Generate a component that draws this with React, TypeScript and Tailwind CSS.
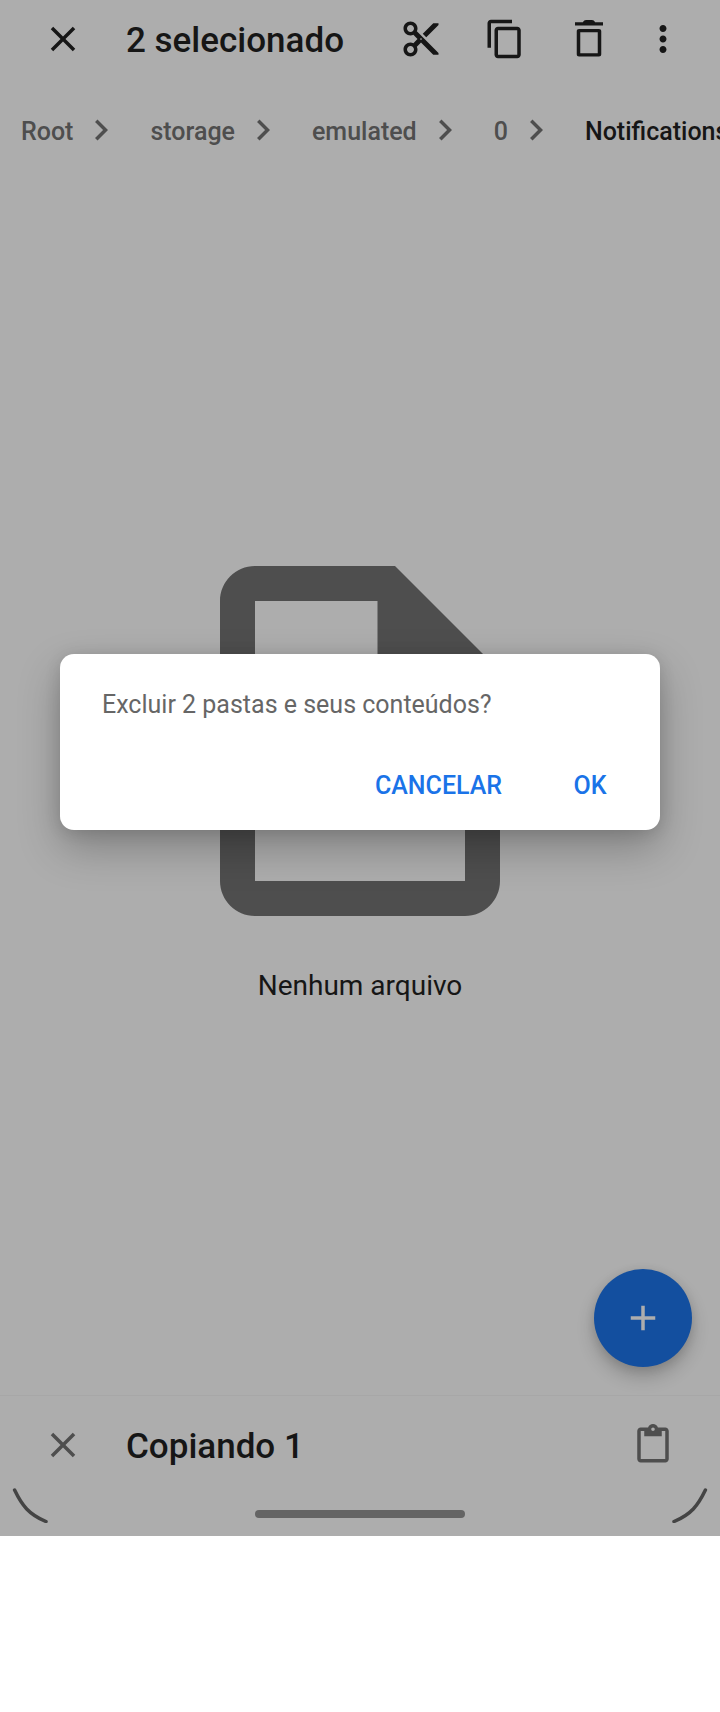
import type { ReactNode } from "react";

function Icon({ children, className = "size-[42px]" }: { children: ReactNode; className?: string }) {
  return (
    <svg viewBox="0 0 24 24" fill="currentColor" aria-hidden="true" className={`${className} shrink-0`}>
      {children}
    </svg>
  );
}

const closePath =
  "M19 6.41 17.59 5 12 10.59 6.41 5 5 6.41 10.59 12 5 17.59 6.41 19 12 13.41 17.59 19 19 17.59 13.41 12z";

const parents = ["Root", "storage", "emulated", "0"];

function TopBar() {
  return (
    <header className="flex h-[78px] items-center px-[36px]">
      <button type="button" aria-label="Fechar" className="ml-[6px]">
        <Icon><path d={closePath} /></Icon>
      </button>
      <h1 className="ml-[42px] flex-1 pt-1 text-[35px] leading-[42px] font-medium whitespace-nowrap">2 selecionado</h1>
      <div className="flex gap-[42px]">
        <button type="button" aria-label="Recortar">
          <Icon>
            <path d="M9.64 7.64c.23-.5.36-1.05.36-1.64 0-2.21-1.79-4-4-4S2 3.79 2 6s1.79 4 4 4c.59 0 1.14-.13 1.64-.36L10 12l-2.36 2.36C7.14 14.13 6.59 14 6 14c-2.21 0-4 1.79-4 4s1.79 4 4 4 4-1.79 4-4c0-.59-.13-1.14-.36-1.64L12 14l7 7h3v-1L9.64 7.64zM6 8c-1.1 0-2-.89-2-2s.9-2 2-2 2 .89 2 2-.9 2-2 2zm0 12c-1.1 0-2-.89-2-2s.9-2 2-2 2 .89 2 2-.9 2-2 2zm6-7.5c-.28 0-.5-.22-.5-.5s.22-.5.5-.5.5.22.5.5-.22.5-.5.5zM19 3l-6 6 2 2 7-7V3z" />
          </Icon>
        </button>
        <button type="button" aria-label="Copiar">
          <Icon>
            <path d="M16 1H4c-1.1 0-2 .9-2 2v14h2V3h12V1zm3 4H8c-1.1 0-2 .9-2 2v14c0 1.1.9 2 2 2h11c1.1 0 2-.9 2-2V7c0-1.1-.9-2-2-2zm0 16H8V7h11v14z" />
          </Icon>
        </button>
        <button type="button" aria-label="Excluir">
          <Icon>
            <path d="M4 2.4h4.5C9 1.5 9.5 1.1 10.3 1.1h3.4C14.5 1.1 15 1.5 15.5 2.4H20v1.900H4zM6.300 6.300h11.400c.8 0 1.300.5 1.300 1.300v13.100c0 .8-.5 1.300-1.300 1.300H6.300C5.500 22 5 21.500 5 20.700V7.600c0-.8.5-1.300 1.300-1.300zM7 8.200v11.900h10V8.200z" fillRule="evenodd" />
          </Icon>
        </button>
        <button type="button" aria-label="Mais opções" className="-ml-[10px]">
          <Icon>
            <path d="M12 8c1.100 0 2-.9 2-2s-.9-2-2-2-2 .9-2 2 .9 2 2 2zm0 2c-1.100 0-2 .9-2 2s.9 2 2 2 2-.9 2-2-.9-2-2-2zm0 6c-1.100 0-2 .9-2 2s.9 2 2 2 2-.9 2-2-.9-2-2-2z" />
          </Icon>
        </button>
      </div>
    </header>
  );
}

function Breadcrumbs() {
  return (
    <nav aria-label="Caminho" className="flex h-[104px] items-center overflow-hidden px-[21px] text-[25px] leading-[30px] font-medium whitespace-nowrap">
      {parents.map((name) => (
        <div key={name} className="mr-[28px] flex shrink-0 items-center gap-[7px] text-[#4e4e4e]">
          <a href="#" className="pt-1">{name}</a>
          <Icon><path d="M10 6 8.590 7.410 13.170 12l-4.580 4.590L10 18l6-6z" /></Icon>
        </div>
      ))}
      <a href="#" aria-current="page" className="shrink-0 pt-1">Notifications</a>
    </nav>
  );
}

function BottomBar() {
  return (
    <footer className="border-t border-[#a7a7a7]">
      <div className="flex h-[98px] items-center pr-[46px] pl-[42px]">
        <button type="button" aria-label="Cancelar cópia" className="text-[#4e4e4e]">
          <Icon><path d={closePath} /></Icon>
        </button>
        <h2 className="ml-[42px] flex-1 pt-1 text-[35px] leading-[42px] font-medium">Copiando 1</h2>
        <button type="button" aria-label="Colar" className="text-[#4e4e4e]">
          <Icon>
            <path d="M19 2h-4.180C14.400.84 13.300 0 12 0S9.600.84 9.180 2H5c-1.100 0-2 .9-2 2v16c0 1.100.9 2 2 2h14c1.100 0 2-.9 2-2V4c0-1.100-.9-2-2-2zm-7 0c.55 0 1 .45 1 1s-.45 1-1 1-1-.45-1-1 .45-1 1-1zm7 18H5V4h2v3h10V4h2v16z" />
          </Icon>
        </button>
      </div>
      <div className="flex h-[42px] items-start justify-between px-[12px] text-[#444444]">
        <svg viewBox="0 0 36 36" className="-mt-[7px] size-[36px]" fill="none" stroke="currentColor" strokeWidth="3.5" strokeLinecap="round" aria-hidden="true">
          <path d="M2.600 3C10 18.500 17 27.500 34 34.500" />
        </svg>
        <div className="mt-[16px] h-[8px] w-[210px] rounded-full bg-[#646464]" />
        <svg viewBox="0 0 36 36" className="-mt-[7px] size-[36px]" fill="none" stroke="currentColor" strokeWidth="3.5" strokeLinecap="round" aria-hidden="true">
          <path d="M33.400 3C26 18.500 19 27.500 2 34.500" />
        </svg>
      </div>
    </footer>
  );
}

function ConfirmDialog() {
  return (
    <div className="absolute inset-0 flex items-center px-[60px] pb-[52px]">
      <div
        role="dialog"
        aria-modal="true"
        aria-labelledby="confirm-message"
        className="w-full rounded-[14px] bg-white pt-[35px] pb-[13px] shadow-[0_18px_42px_rgba(0,0,0,0.26),0_2px_16px_rgba(0,0,0,0.12)]"
      >
        <p id="confirm-message" className="px-[42px] text-[25px] leading-[32px] text-[#666666]">
          Excluir 2 pastas e seus conteúdos?
        </p>
        <div className="mt-[33px] flex justify-end gap-[35px] px-[39px] text-[25px] leading-[30px] font-medium text-[#1a73e8]">
          <button type="button" className="h-[63px] w-[171px]">CANCELAR</button>
          <button type="button" className="h-[63px] w-[62px]">OK</button>
        </div>
      </div>
    </div>
  );
}

export default function App() {
  return (
    <div className="min-h-screen bg-white font-['Roboto',sans-serif] text-[#161616]">
      <div className="relative flex min-h-[1536px] flex-col overflow-hidden bg-[#adadad]">
        <TopBar />
        <Breadcrumbs />
        <main className="relative flex flex-1 flex-col items-center justify-center pb-[43px]">
          <Icon className="size-[420px] text-[#4e4e4e]">
            <path d="M14 2H6c-1.100 0-2 .9-2 2v16c0 1.100.9 2 2 2h12c1.100 0 2-.9 2-2V8l-6-6zM6 20V4h7v5h5v11H6z" />
          </Icon>
          <p className="mt-[18px] text-[28px] leading-[34px]">Nenhum arquivo</p>
          <button
            type="button"
            aria-label="Adicionar"
            className="absolute right-[28px] bottom-[28px] grid size-[98px] place-items-center rounded-full bg-[#134f9f] text-[#adadad] shadow-[0_10px_18px_rgba(0,0,0,0.2),0_2px_10px_rgba(0,0,0,0.1)]"
          >
            <Icon><path d="M19 13h-6v6h-2v-6H5v-2h6V5h2v6h6v2z" /></Icon>
          </button>
        </main>
        <BottomBar />
        <ConfirmDialog />
      </div>
    </div>
  );
}
